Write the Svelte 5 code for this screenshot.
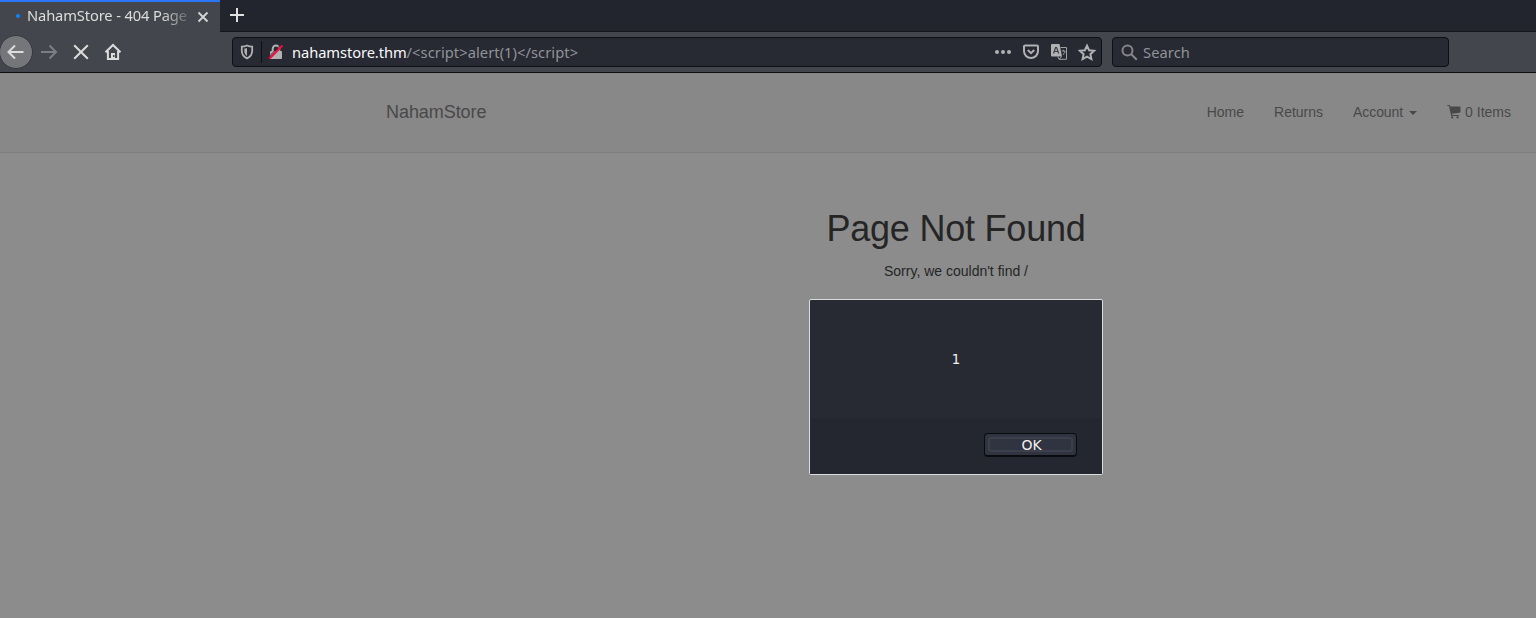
<script>
  let open = $state(true);
</script>

<div class="window">
  <div class="tabs">
    <div class="tab">
      <span class="dot"></span>
      <span class="title">NahamStore - 404 Page Not Found</span>
      <svg class="close" width="12" height="12" viewBox="0 0 12 12"><path d="M1.500 1.500l9 9M10.500 1.500l-9 9" /></svg>
    </div>
    <svg class="plus" width="14" height="14" viewBox="0 0 14 14"><path d="M7 0v14M0 7h14" /></svg>
  </div>

  <div class="toolbar">
    <div class="nav">
      <span class="back">
        <svg width="18" height="16" viewBox="0 0 18 16"><path d="M16.500 8H2M8 1.500L1.500 8 8 14.500" /></svg>
      </span>
      <svg class="fwd" width="18" height="16" viewBox="0 0 18 16"><path d="M1 8h15M9.500 1.500L16 8l-6.500 6.500" /></svg>
      <svg class="stop" width="16" height="16" viewBox="0 0 16 16"><path d="M1.200 1.200l13.600 13.600M14.800 1.200L1.200 14.800" /></svg>
      <svg class="home" width="18" height="18" viewBox="0 0 18 18">
        <path d="M1.500 9.300L9 2l7.500 7.300M3.900 8v8.100h10.200V8" />
        <path class="door" d="M7 16v-6h4v6z" />
        <path class="knob" d="M9 12h1.500v2h-1.500z" />
      </svg>
    </div>

    <div class="field url">
      <svg class="shield" width="14" height="16" viewBox="0 0 14 16">
        <path d="M7 1.500c2 .9 3.400 1.100 5.200 1.100v4.200c0 3.600-1.700 6-5.200 7.600-3.500-1.600-5.200-4-5.200-7.600V2.600c1.800 0 3.200-.2 5.200-1.100z" />
        <path class="solid" d="M7 4v8C5.200 10.700 4.300 9.200 4.300 7V4.600C5.300 4.500 6 4.400 7 4z" />
      </svg>
      <span class="sep"></span>
      <svg class="lock" width="16" height="16" viewBox="0 0 16 16">
        <path d="M4.700 8V4.700a3.300 3.300 0 0 1 6.600 0V8" />
        <path class="solid" d="M3 7h10a1 1 0 0 1 1 1v6a1 1 0 0 1-1 1H3a1 1 0 0 1-1-1V8a1 1 0 0 1 1-1z" />
        <path class="cut" d="M0 13.500L13 .5" />
        <path class="slash" d="M1.200 14.800L14.500 1.500" />
      </svg>
      <span class="address"><b>nahamstore.thm</b>{'/<script>alert(1)</scr' + 'ipt>'}</span>
      <div class="actions">
        <svg width="16" height="16" viewBox="0 0 16 16"><g class="solid"><circle cx="2" cy="8" r="2" /><circle cx="8" cy="8" r="2" /><circle cx="14" cy="8" r="2" /></g></svg>
        <svg width="16" height="16" viewBox="0 0 16 16"><path d="M2 1.500h12a1 1 0 0 1 1 1V7A7 7 0 0 1 1 7V2.500a1 1 0 0 1 1-1zM4.800 6L8 9.100 11.200 6" /></svg>
        <svg class="translate" width="16" height="16" viewBox="0 0 16 16">
          <path class="solid" d="M1 0h7.500L11 12.500H1a1 1 0 0 1-1-1V1a1 1 0 0 1 1-1z" />
          <path class="thin" d="M9.500 3.500h6v11.800H8L6.700 12.500M8.500 15l2-2.500" />
          <path class="mark" d="M10.800 7h3.200v1.500l-1.500 1.200v1M12.400 5.800V7" />
          <path class="letter" d="M2.500 9.500L4.600 3.500h1L7.700 9.500M3.300 7.500h3.700" />
        </svg>
        <svg width="18" height="17" viewBox="0 0 18 17"><path d="M9 1.700l2.100 4.500 5 .6-3.700 3.400 1 4.900L9 12.700l-4.400 2.400 1-4.900-3.700-3.400 5-.6z" /></svg>
      </div>
    </div>

    <div class="field search">
      <svg width="17" height="17" viewBox="0 0 17 17"><circle cx="6.500" cy="6.500" r="5" /><path d="M10 10l5.800 5.800" /></svg>
      <span>Search</span>
    </div>
  </div>

  <main>
    <header>
      <div class="container">
        <span class="brand">NahamStore</span>
        <nav>
          <span>Home</span>
          <span>Returns</span>
          <span class="account">Account <i class="caret"></i></span>
          <span class="cart">
            <svg width="14" height="14" viewBox="0 0 14 14"><path d="M.3 0h2.300l.7 1.500H13.500V7l-.8.800-7.700.9.300 1.300H12v1.100H4.200L2 1.100H.3z" /><circle cx="5.200" cy="12.400" r="1.100" /><circle cx="10.500" cy="12.400" r="1.100" /></svg>
            0 Items
          </span>
        </nav>
      </div>
    </header>
    <section class="container message">
      <h1>Page Not Found</h1>
      <p>Sorry, we couldn't find /</p>
    </section>
    {#if open}
      <div class="dialog">
        <div class="body">1</div>
        <div class="foot"><button onclick={() => (open = false)}><span>OK</span></button></div>
      </div>
    {/if}
  </main>
</div>

<style>
  :global(body) { margin: 0; overflow: hidden; }
  .window { width: 1536px; height: 618px; overflow: hidden; display: flex; flex-direction: column; font-family: "Noto Sans", sans-serif; font-size: 14.700px; }
  .window * { box-sizing: border-box; }
  svg { display: block; flex: none; fill: none; stroke: #b1b1b3; stroke-width: 2; overflow: visible; }
  .solid { fill: #b1b1b3; stroke: none; }

  .tabs { height: 32px; flex: none; display: flex; background: #23252e; border-bottom: 1px solid #14161b; }
  .tab { width: 220px; height: 32px; flex: none; display: flex; align-items: center; padding: 0 0 2px 16px; background: #43464d; border-top: 2px solid #2a76f6; }
  .dot { width: 4px; height: 4px; border-radius: 50%; background: #0a84ff; margin-right: 7px; }
  .title { width: 162px; margin-top: -2px; overflow: hidden; white-space: nowrap; color: #dddddb; letter-spacing: -0.130px; line-height: 24px; mask-image: linear-gradient(to right, #000 134px, transparent 168px); }
  .close { margin: 2px 0 0 8px; stroke: #d5d6d7; stroke-width: 1.800; }
  .plus { margin: 8px 0 0 10px; stroke: #e0e0e0; }

  .toolbar { height: 41px; flex: none; display: flex; align-items: flex-start; background: #43464d; border-bottom: 1px solid #0c0e12; }
  .nav { width: 232px; height: 40px; flex: none; display: flex; align-items: center; }
  .nav svg { stroke: #dcdcda; }
  .back { width: 34px; height: 34px; border-radius: 50%; background: #74767a; border: 1px solid #35373e; margin-left: -1px; display: flex; align-items: center; justify-content: center; }
  .nav .fwd { margin-left: 7px; stroke: #7c7e83; }
  .nav .stop { margin-left: 15px; }
  .nav .home { margin-left: 15px; }
  .nav .home .door { fill: #dcdcda; stroke: none; }
  .nav .home .knob { fill: #43464d; stroke: none; }
  .field { height: 30px; margin-top: 5px; display: flex; align-items: center; background: #272933; border: 1px solid #0d0f14; border-radius: 4px; }
  .url { width: 870px; padding: 0 5px 0 7px; flex: none; }
  .sep { width: 1px; height: 22px; background: #0d0f14; margin: 0 6px 0 7px; }
  .shield { stroke-width: 1.800; }
  .lock .cut { stroke: #272933; stroke-width: 1; }
  .lock .slash { stroke: #f20b3d; stroke-width: 2.200; }
  .address { margin-left: 8px; color: #929398; line-height: 20px; white-space: nowrap; letter-spacing: 0.060px; }
  .address b { font-weight: 400; color: #f9f9fa; letter-spacing: -0.080px; }
  .actions { margin-left: auto; display: flex; align-items: center; gap: 12px; }
  .actions svg:last-child { margin-left: -1px; }
  .translate .thin { stroke-width: 1; stroke: #a0a1a5; }
  .translate .mark { stroke-width: 1; stroke: #a0a1a5; }
  .translate .letter { stroke: #3c3e47; stroke-width: 1.200; }
  .search { width: 337px; margin-left: 10px; padding-left: 8px; color: #929398; }
  .search svg { stroke: #85868b; }
  .search span { margin-left: 5px; line-height: 20px; letter-spacing: 0.080px; }

  main { flex: 1; position: relative; background: #8c8c8c; color: #252525; font-family: "Liberation Sans", Arial, sans-serif; font-size: 14px; }
  header { height: 80px; background: #888; border-bottom: 1px solid #7f7f7f; color: #484848; }
  .container { width: 1170px; margin-left: 371px; padding: 0 15px; }
  header .container { height: 78px; display: flex; align-items: center; justify-content: space-between; }
  .brand { font-size: 18px; line-height: 20px; letter-spacing: -0.060px; }
  nav { display: flex; line-height: 20px; }
  nav > span { padding: 0 15px; display: flex; align-items: center; white-space: nowrap; }
  .account { letter-spacing: -0.080px; }
  .caret { margin: 1px 0 0 6px; border: 4px solid transparent; border-top-color: #484848; border-bottom: 0; }
  .cart svg { fill: #484848; stroke: none; margin-right: 4px; }
  .message { display: flex; flex-direction: column; align-items: center; padding-top: 56px; }
  h1 { margin: 0; font-size: 36px; font-weight: 400; line-height: 40px; letter-spacing: -0.220px; }
  p { margin: 12px 0 0; line-height: 20px; }

  .dialog { position: absolute; left: 809px; top: 226px; width: 294px; height: 176px; border: 1px solid #dcdcdc; border-radius: 2px; background: #272933; display: flex; flex-direction: column; font-family: "DejaVu Sans", sans-serif; font-size: 13.300px; color: #f0f0ee; }
  .body { height: 118px; display: flex; align-items: center; justify-content: center; }
  .foot { flex: 1; background: #252730; display: flex; justify-content: flex-end; padding: 15px 25px 0 0; }
  button { width: 93px; height: 24px; padding: 3px; border: 1px solid #0a0b0f; border-bottom-width: 2px; border-radius: 4px; background: #303340; color: inherit; font: inherit; display: flex; }
  button span { flex: 1; border: 2px solid #3d404b; border-radius: 3px; padding-left: 2px; font-size: 14px; line-height: 12px; text-align: center; }
</style>
